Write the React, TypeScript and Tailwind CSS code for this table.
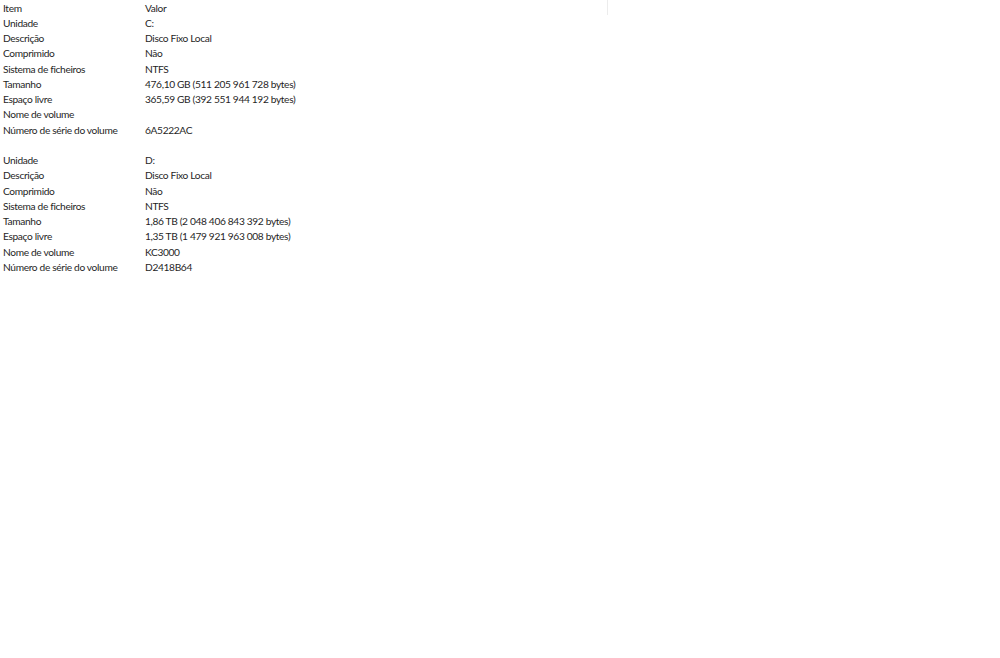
const drives = [
  {
    unidade: "C:",
    tamanho: "476,10 GB (511 205 961 728 bytes)",
    livre: "365,59 GB (392 551 944 192 bytes)",
    nome: "",
    serie: "6A5222AC",
  },
  {
    unidade: "D:",
    tamanho: "1,86 TB (2 048 406 843 392 bytes)",
    livre: "1,35 TB (1 479 921 963 008 bytes)",
    nome: "KC3000",
    serie: "D2418B64",
  },
];

function Row({ item, valor }: { item: string; valor: string }) {
  return (
    <div className="flex h-[15.25px] items-center">
      <div className="w-[145px] pl-[3px]">{item}</div>
      <div>{valor}</div>
    </div>
  );
}

export default function App() {
  return (
    <div
      className="min-h-screen w-full bg-white text-[10.2px] leading-none tracking-[-0.35px] text-[#1f1f1f]"
      style={{ fontFamily: 'Lato, "Noto Sans", sans-serif' }}
    >
      <div className="flex h-[15.25px] items-center">
        <div className="w-[145px] pl-[3px]">Item</div>
        <div className="w-[462px]">Valor</div>
        <div className="h-[15px] w-px self-start bg-[#ececec]" />
      </div>
      {drives.map((d, i) => (
        <div key={d.unidade}>
          {i > 0 && <div className="h-[15.25px]" />}
          <Row item="Unidade" valor={d.unidade} />
          <Row item="Descrição" valor="Disco Fixo Local" />
          <Row item="Comprimido" valor="Não" />
          <Row item="Sistema de ficheiros" valor="NTFS" />
          <Row item="Tamanho" valor={d.tamanho} />
          <Row item="Espaço livre" valor={d.livre} />
          <Row item="Nome de volume" valor={d.nome} />
          <Row item="Número de série do volume" valor={d.serie} />
        </div>
      ))}
    </div>
  );
}
